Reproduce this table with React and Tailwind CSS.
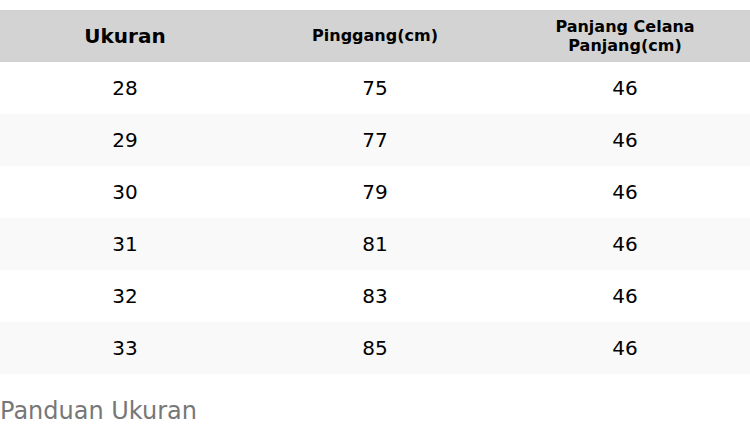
import React from "react";

const rows = [
  ["28", "75", "46"],
  ["29", "77", "46"],
  ["30", "79", "46"],
  ["31", "81", "46"],
  ["32", "83", "46"],
  ["33", "85", "46"],
];

export default function App() {
  return (
    <div
      className="w-[750px] bg-white text-black"
      style={{ fontFamily: '"DejaVu Sans", sans-serif' }}
    >
      <div className="pt-[10px]">
        <div className="grid grid-cols-3 h-[52px] bg-[#d3d3d3] font-bold items-center text-center">
          <div className="text-[20px]">Ukuran</div>
          <div className="text-[16px]">Pinggang(cm)</div>
          <div className="text-[16px] leading-[19px]">
            Panjang Celana
            <br />
            Panjang(cm)
          </div>
        </div>
        {rows.map((r, i) => (
          <div
            key={i}
            className={`grid grid-cols-3 h-[52px] items-center text-center text-[20px] ${
              i % 2 === 1 ? "bg-[#f9f9f9]" : "bg-white"
            }`}
          >
            {r.map((c, j) => (
              <div key={j}>{c}</div>
            ))}
          </div>
        ))}
      </div>
      <p className="mt-[22px] text-[24px] leading-[30px] text-[#777777]">
        Panduan Ukuran
      </p>
    </div>
  );
}
